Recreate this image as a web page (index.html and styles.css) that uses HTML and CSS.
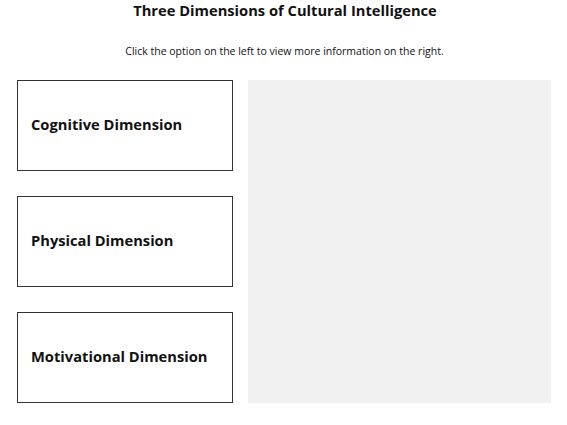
FILE: index.html
```html
<!DOCTYPE html>
<html>
<head>
<meta charset="utf-8">
<link rel="stylesheet" href="styles.css">
</head>
<body>
<div class="page">
  <h1 class="title">Three Dimensions of Cultural Intelligence</h1>
  <p class="subtitle">Click the option on the left to view more information on the right.</p>
  <div class="main">
    <div class="options">
      <div class="option">Cognitive Dimension</div>
      <div class="option">Physical Dimension</div>
      <div class="option">Motivational Dimension</div>
    </div>
    <div class="panel"></div>
  </div>
</div>
</body>
</html>
```
FILE: styles.css
```css
html, body {
  margin: 0;
  padding: 0;
  background: #fff;
}
body {
  font-family: "Open Sans", "Liberation Sans", sans-serif;
  color: #111;
}
.page {
  padding: 0 16px 0 17px;
}
.title {
  margin: 0;
  font-size: 14.7px;
  font-weight: 700;
  text-align: center;
  line-height: 20px;
  padding-left: 2px;
}
.subtitle {
  margin: 23px 0 0 0;
  font-size: 10.5px;
  text-align: center;
  line-height: 16px;
  padding-left: 1px;
}
.main {
  display: flex;
  gap: 15px;
  margin-top: 21px;
}
.options {
  display: flex;
  flex-direction: column;
  gap: 25px;
  width: 216px;
}
.option {
  box-sizing: border-box;
  height: 91px;
  border: 1px solid #333;
  display: flex;
  align-items: center;
  padding-left: 13px;
  padding-bottom: 4px;
  font-size: 14.7px;
  font-weight: 700;
}
.panel {
  width: 303px;
  height: 323px;
  background: #f1f1f1;
}
```
